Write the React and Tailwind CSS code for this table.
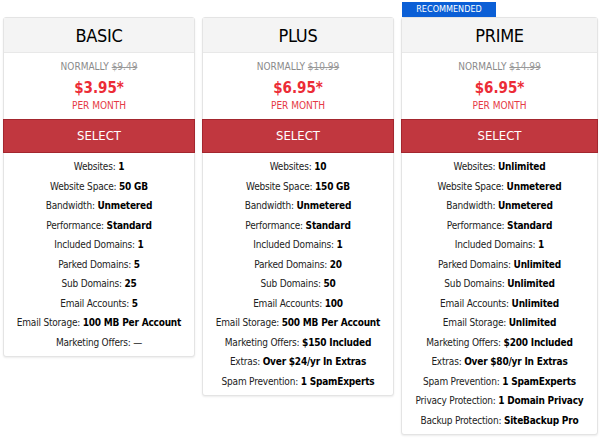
import React from 'react';

const plans = [
  {
    name: 'BASIC',
    normally: '$9.49',
    price: '$3.95*',
    features: [
      ['Websites', '1'],
      ['Website Space', '50 GB'],
      ['Bandwidth', 'Unmetered'],
      ['Performance', 'Standard'],
      ['Included Domains', '1'],
      ['Parked Domains', '5'],
      ['Sub Domains', '25'],
      ['Email Accounts', '5'],
      ['Email Storage', '100 MB Per Account'],
      ['Marketing Offers', null],
    ],
  },
  {
    name: 'PLUS',
    normally: '$10.99',
    price: '$6.95*',
    features: [
      ['Websites', '10'],
      ['Website Space', '150 GB'],
      ['Bandwidth', 'Unmetered'],
      ['Performance', 'Standard'],
      ['Included Domains', '1'],
      ['Parked Domains', '20'],
      ['Sub Domains', '50'],
      ['Email Accounts', '100'],
      ['Email Storage', '500 MB Per Account'],
      ['Marketing Offers', '$150 Included'],
      ['Extras', 'Over $24/yr In Extras'],
      ['Spam Prevention', '1 SpamExperts'],
    ],
  },
  {
    name: 'PRIME',
    normally: '$14.99',
    price: '$6.95*',
    recommended: true,
    features: [
      ['Websites', 'Unlimited'],
      ['Website Space', 'Unmetered'],
      ['Bandwidth', 'Unmetered'],
      ['Performance', 'Standard'],
      ['Included Domains', '1'],
      ['Parked Domains', 'Unlimited'],
      ['Sub Domains', 'Unlimited'],
      ['Email Accounts', 'Unlimited'],
      ['Email Storage', 'Unlimited'],
      ['Marketing Offers', '$200 Included'],
      ['Extras', 'Over $80/yr In Extras'],
      ['Spam Prevention', '1 SpamExperts'],
      ['Privacy Protection', '1 Domain Privacy'],
      ['Backup Protection', 'SiteBackup Pro'],
    ],
  },
];

function PlanCard({ plan }) {
  return (
    <div className="relative bg-white border border-[#e4e4e4] rounded-[3px] shadow-[0_1px_2px_rgba(0,0,0,0.08)]">
      {plan.recommended && (
        <div className="absolute -top-[16px] left-0 w-[94px] h-[15px] bg-[#0b5fd6] text-white text-[9px] leading-[15px] text-center">
          RECOMMENDED
        </div>
      )}
      <div className="h-[35px] bg-[#f4f4f4] border-b border-[#e8e8e8] flex items-center justify-center text-[18px] tracking-[-0.3px] text-black">
        {plan.name}
      </div>
      <div className="pt-[7px] pb-[6px] text-center">
        <div className="h-[14px] leading-[14px] text-[10px] text-[#8a8a8a]">
          NORMALLY <span className="line-through text-[#999]">{plan.normally}</span>
        </div>
        <div className="mt-[3px] h-[22px] leading-[22px] text-[15px] font-bold text-[#ec2c36]">
          {plan.price}
        </div>
        <div className="h-[14px] leading-[14px] text-[10px] text-[#e53a44]">PER MONTH</div>
      </div>
      <div className="h-[34px] mx-[-1px] bg-[#c1373f] border border-[#a3262e] flex items-center justify-center text-white text-[13px]">
        SELECT
      </div>
      <div className="pt-[4px] pb-[4px] text-center text-[10px] tracking-[-0.2px] text-[#222]">
        {plan.features.map(([label, value]) => (
          <div key={label} className="h-[19.5px] leading-[19.5px] whitespace-nowrap">
            {label}: {value ? <b className="text-black">{value}</b> : '—'}
          </div>
        ))}
      </div>
    </div>
  );
}

export default function App() {
  return (
    <div
      className="w-[600px] h-[438px] bg-white overflow-hidden"
      style={{ fontFamily: '"DejaVu Sans Condensed", "DejaVu Sans", sans-serif' }}
    >
      <div className="grid grid-cols-[192px_192px_197px] gap-[7px] pl-[3px] pt-[17px] items-start">
        {plans.map((p) => (
          <PlanCard key={p.name} plan={p} />
        ))}
      </div>
    </div>
  );
}
